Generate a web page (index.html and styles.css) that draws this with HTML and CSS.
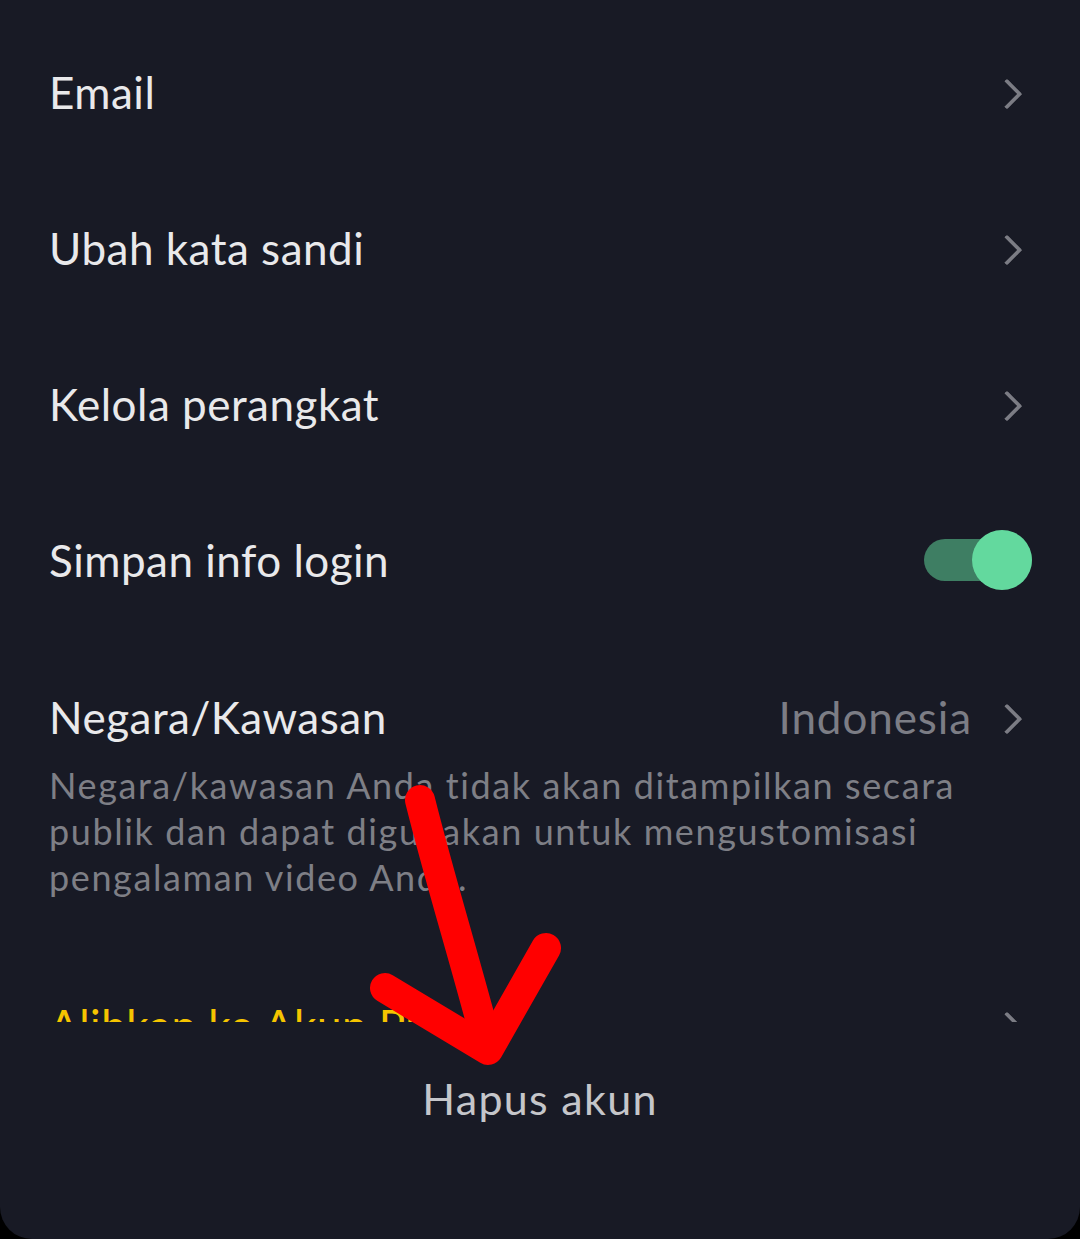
FILE: index.html
```html
<!DOCTYPE html>
<html lang="id">
<head>
  <meta charset="UTF-8">
  <meta name="viewport" content="width=device-width, initial-scale=1.0">
  <title>Kelola akun</title>
  <link rel="stylesheet" href="styles.css">
</head>
<body>
  <div class="sheet">
    <div class="list">
      <div class="row">
        <span class="label">Email</span>
        <span class="chevron"></span>
      </div>
      <div class="row">
        <span class="label">Ubah kata sandi</span>
        <span class="chevron"></span>
      </div>
      <div class="row">
        <span class="label">Kelola perangkat</span>
        <span class="chevron"></span>
      </div>
      <div class="row">
        <span class="label">Simpan info login</span>
        <div class="switch on"><div class="knob"></div></div>
      </div>

      <div class="region">
        <div class="region-head">
          <span class="label">Negara/Kawasan</span>
          <span class="value">Indonesia</span>
          <span class="chevron"></span>
        </div>
        <p class="note">Negara/kawasan Anda tidak akan ditampilkan secara publik dan dapat digunakan untuk mengustomisasi pengalaman video Anda.</p>
      </div>

      <div class="row">
        <span class="label pro">Alihkan ke Akun Pro</span>
        <span class="chevron"></span>
      </div>
    </div>

    <!-- Footer -->
    <div class="footer">
      <button class="delete">Hapus akun</button>
    </div>

    <!-- Hand-drawn marker arrow -->
    <svg class="marker" width="1080" height="1239" viewBox="0 0 1080 1239">
      <g fill="none" stroke="#ff0000" stroke-width="30" stroke-linecap="round" stroke-linejoin="round">
        <path d="M420 800 C440 880 465 960 488 1048"/>
        <path d="M385 988 L488 1050 L546 948"/>
      </g>
    </svg>
  </div>
</body>
</html>
```

FILE: styles.css
```css
* {
  margin: 0;
  padding: 0;
  box-sizing: border-box;
}

body {
  background-color: #000;
  font-family: Lato, "Open Sans", sans-serif;
  width: 1080px;
  height: 1239px;
  overflow: hidden;
}

.sheet {
  position: relative;
  width: 1080px;
  height: 1239px;
  background-color: #181a25;
  border-radius: 0 0 32px 32px;
  overflow: hidden;
}

.list {
  height: 1022px;
  overflow: hidden;
  padding-top: 14px;
}

.row {
  height: 156px;
  display: flex;
  align-items: center;
  justify-content: space-between;
  padding: 0 54px 0 49px;
}

.row:nth-child(4) {
  padding-right: 48px;
}

.label {
  font-size: 44px;
  color: #e9e9eb;
  letter-spacing: 0.5px;
}

.label.pro {
  color: #f5c400;
}

.chevron {
  width: 32px;
  height: 32px;
  display: inline-block;
  position: relative;
}

.chevron::after {
  content: '';
  position: absolute;
  left: 2px;
  top: 7px;
  width: 18px;
  height: 18px;
  border-top: 4.5px solid #7b7c84;
  border-right: 4.5px solid #7b7c84;
  border-radius: 2px;
  transform: rotate(45deg);
}

/* Toggle */
.switch {
  position: relative;
  width: 108px;
  height: 42px;
  border-radius: 21px;
  background-color: #3e7e63;
}

.switch .knob {
  position: absolute;
  right: 0;
  top: -9px;
  width: 60px;
  height: 60px;
  border-radius: 50%;
  background-color: #63d99e;
}

.region {
  padding: 51px 54px 47px 49px;
}

.region-head {
  height: 56px;
  display: flex;
  align-items: center;
}

.region-head .label {
  flex: 1;
}

.value {
  font-size: 44px;
  color: #7c7d85;
  letter-spacing: 0.9px;
  margin-right: 22px;
}

.note {
  margin-top: 17px;
  font-size: 36px;
  line-height: 46px;
  letter-spacing: 1.6px;
  color: #7e7f86;
  padding-right: 30px;
}

.footer {
  height: 217px;
  display: flex;
  justify-content: center;
  padding-top: 48px;
}

.delete {
  background: none;
  border: none;
  font-family: inherit;
  font-size: 43px;
  letter-spacing: 1.3px;
  color: #c5c6ca;
  height: 56px;
}

.marker {
  position: absolute;
  left: 0;
  top: 0;
  pointer-events: none;
}
```
